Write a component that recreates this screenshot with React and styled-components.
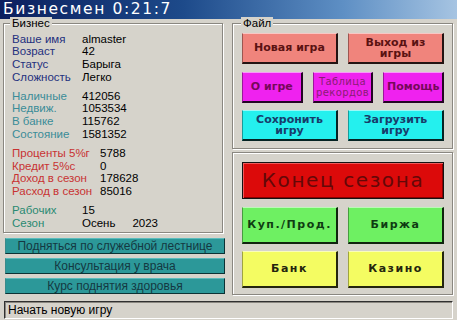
import React from 'react';
import styled, { createGlobalStyle } from 'styled-components';

const BG = '#d6d3cb';

const Global = createGlobalStyle`
  html, body { margin: 0; padding: 0; background: ${BG}; }
  body { width: 457px; height: 320px; overflow: hidden; font-family: "Liberation Sans", Arial, sans-serif; }
  * { box-sizing: border-box; }
`;

const Window = styled.div`
  width: 457px;
  height: 320px;
  display: flex;
  flex-direction: column;
  background: ${BG};
  overflow: hidden;
`;

const TitleBar = styled.div`
  height: 19px;
  flex: none;
  display: flex;
  align-items: center;
  padding-left: 3px;
  background: linear-gradient(90deg, #0b1f5e 0%, #1d4a8a 40%, #5e8fc4 75%, #a6c4e2 100%);
  color: #fff;
  font-family: "DejaVu Sans", sans-serif;
  font-size: 15.5px;
  letter-spacing: 1.6px;
  line-height: 19px;
  white-space: nowrap;
`;

const Main = styled.div`
  flex: 1;
  display: flex;
  gap: 7px;
  padding: 4px 0 0 3px;
  min-height: 0;
`;

const Column = styled.div`
  width: ${p => p.$w}px;
  flex: none;
  display: flex;
  flex-direction: column;
`;

const GroupBox = styled.div`
  width: ${p => p.$w}px;
  height: ${p => p.$h}px;
  margin-top: ${p => p.$mt || 0}px;
  border: 1px solid #8a8780;
  box-shadow: 1px 1px 0 #fff, inset 1px 1px 0 #fff;
  display: flex;
  flex-direction: column;
`;

const Legend = styled.div`
  align-self: flex-start;
  margin: -7px 0 0 ${p => p.$ml}px;
  padding: 0 2px;
  background: ${BG};
  font-size: 11.5px;
  line-height: 13px;
  color: #000;
`;

const InfoArea = styled.div`
  padding: 2.6px 0 0 8px;
  font-size: 11.5px;
  line-height: 12.7px;
`;

const Block = styled.div`
  display: grid;
  grid-template-columns: ${p => p.$col}px auto;
  margin-bottom: 6.3px;
`;

const Label = styled.div`
  color: ${p => p.$c};
  white-space: nowrap;
`;

const Value = styled.div`
  color: #000;
  white-space: nowrap;
`;

const Year = styled.span`
  margin-left: 17px;
`;

const TealList = styled.div`
  display: flex;
  flex-direction: column;
  gap: 4px;
  margin: 5px 0 0 2px;
`;

const TealButton = styled.button`
  width: 220px;
  height: 16px;
  padding: 0;
  background: #2c9899;
  border: 1px solid;
  border-color: #5cbcbc #0c3234 #0c3234 #3a8a8a;
  color: #143842;
  font-family: "Liberation Sans", Arial, sans-serif;
  font-size: 12px;
  line-height: 14px;
  text-align: center;
  white-space: nowrap;
`;

const ButtonArea = styled.div`
  display: flex;
  flex-direction: column;
  gap: ${p => p.$gap}px;
  padding: ${p => p.$pt}px 8px 0 9px;
`;

const ButtonRow = styled.div`
  display: grid;
  grid-template-columns: repeat(${p => p.$n}, 1fr);
  gap: 10px;
  height: ${p => p.$h}px;
`;

const ColorButton = styled.button`
  padding: 0;
  margin: 0;
  background: ${p => p.$bg};
  color: ${p => p.$fg};
  border-style: solid;
  border-width: 1px 2px 2px 1px;
  border-color: rgba(255, 255, 255, 0.55) rgba(0, 0, 0, 0.85) rgba(0, 0, 0, 0.85) rgba(0, 0, 0, 0.35);
  font-family: "DejaVu Sans", sans-serif;
  font-weight: ${p => (p.$light ? 400 : 700)};
  font-size: ${p => (p.$light ? 10 : 11)}px;
  letter-spacing: ${p => p.$ls || 0}px;
  line-height: ${p => (p.$light ? 11 : 11.5)}px;
  display: flex;
  flex-direction: column;
  align-items: center;
  justify-content: center;
  text-align: center;
  white-space: nowrap;
`;

const BigButton = styled.button`
  height: 37px;
  padding: 0;
  background: #dc0a0a;
  color: #640808;
  border: 1px solid #141414;
  box-shadow: inset 1px 1px 0 #f05a5a, inset -1px -1px 0 #8a0000;
  font-family: "DejaVu Sans", sans-serif;
  font-size: 20px;
  letter-spacing: 1.6px;
  line-height: 35px;
  text-align: center;
  white-space: nowrap;
`;

const Line = styled.span`
  display: block;
`;

const StatusBar = styled.div`
  height: 18px;
  flex: none;
  margin: 0 4px 1px 4px;
  border-style: solid;
  border-width: 1px;
  border-color: #303030 #ffffff #ffffff #303030;
  box-shadow: inset 1px 1px 0 #8a8780;
  padding-left: 3px;
  font-size: 12px;
  line-height: 16px;
  color: #000;
`;

const blocks = [
  {
    col: 70,
    color: '#24307e',
    rows: [
      ['Ваше имя', 'almaster'],
      ['Возраст', '42'],
      ['Статус', 'Барыга'],
      ['Сложность', 'Легко'],
    ],
  },
  {
    col: 70,
    color: '#3a8c98',
    rows: [
      ['Наличные', '412056'],
      ['Недвиж.', '1053534'],
      ['В банке', '115762'],
      ['Состояние', '1581352'],
    ],
  },
  {
    col: 88,
    color: '#c83232',
    rows: [
      ['Проценты 5%г', '5788'],
      ['Кредит 5%с', '0'],
      ['Доход в сезон', '178628'],
      ['Расход в сезон', '85016'],
    ],
  },
  {
    col: 70,
    color: '#2a8a72',
    rows: [
      ['Рабочих', '15'],
      ['Сезон', 'season'],
    ],
  },
];

const SALMON = { $bg: '#f0847c', $fg: '#5a1212' };
const MAGENTA = { $bg: '#ef22ef', $fg: '#76085a' };
const CYAN = { $bg: '#24f0ee', $fg: '#173c6a' };
const GREEN = { $bg: '#6ef062', $fg: '#0f3c12', $ls: 1.5 };
const YELLOW = { $bg: '#f4fc62', $fg: '#24240e', $ls: 1.5 };

export default function App() {
  return (
    <>
      <Global />
      <Window>
        <TitleBar>Бизнесмен 0:21:7</TitleBar>
        <Main>
          <Column $w={222}>
            <GroupBox $w={220} $h={210}>
              <Legend $ml={6}>Бизнес</Legend>
              <InfoArea>
                {blocks.map((b, i) => (
                  <Block key={i} $col={b.col}>
                    {b.rows.map(([l, v]) => (
                      <React.Fragment key={l}>
                        <Label $c={b.color}>{l}</Label>
                        <Value>
                          {v === 'season' ? (
                            <>
                              Осень<Year>2023</Year>
                            </>
                          ) : (
                            v
                          )}
                        </Value>
                      </React.Fragment>
                    ))}
                  </Block>
                ))}
              </InfoArea>
            </GroupBox>
            <TealList>
              <TealButton>Подняться по служебной лестнице</TealButton>
              <TealButton>Консультация у врача</TealButton>
              <TealButton>Курс поднятия здоровья</TealButton>
            </TealList>
          </Column>
          <Column $w={221}>
            <GroupBox $w={221} $h={126}>
              <Legend $ml={8}>Файл</Legend>
              <ButtonArea $gap={7.5} $pt={3}>
                <ButtonRow $n={2} $h={31}>
                  <ColorButton {...SALMON}>Новая игра</ColorButton>
                  <ColorButton {...SALMON}>
                    <Line>Выход из</Line>
                    <Line>игры</Line>
                  </ColorButton>
                </ButtonRow>
                <ButtonRow $n={3} $h={31}>
                  <ColorButton {...MAGENTA}>О игре</ColorButton>
                  <ColorButton {...MAGENTA} $fg="#8a1c74" $light $ls={0.4}>
                    <Line>Таблица</Line>
                    <Line>рекордов</Line>
                  </ColorButton>
                  <ColorButton {...MAGENTA}>Помощь</ColorButton>
                </ButtonRow>
                <ButtonRow $n={2} $h={31}>
                  <ColorButton {...CYAN}>
                    <Line>Сохронить</Line>
                    <Line>игру</Line>
                  </ColorButton>
                  <ColorButton {...CYAN}>
                    <Line>Загрузить</Line>
                    <Line>игру</Line>
                  </ColorButton>
                </ButtonRow>
              </ButtonArea>
            </GroupBox>
            <GroupBox $w={221} $h={143} $mt={3}>
              <ButtonArea $gap={7.5} $pt={9}>
                <BigButton>Конец сезона</BigButton>
                <ButtonRow $n={2} $h={37}>
                  <ColorButton {...GREEN}>Куп./Прод.</ColorButton>
                  <ColorButton {...GREEN}>Биржа</ColorButton>
                </ButtonRow>
                <ButtonRow $n={2} $h={37}>
                  <ColorButton {...YELLOW}>Банк</ColorButton>
                  <ColorButton {...YELLOW}>Казино</ColorButton>
                </ButtonRow>
              </ButtonArea>
            </GroupBox>
          </Column>
        </Main>
        <StatusBar>Начать новую игру</StatusBar>
      </Window>
    </>
  );
}
